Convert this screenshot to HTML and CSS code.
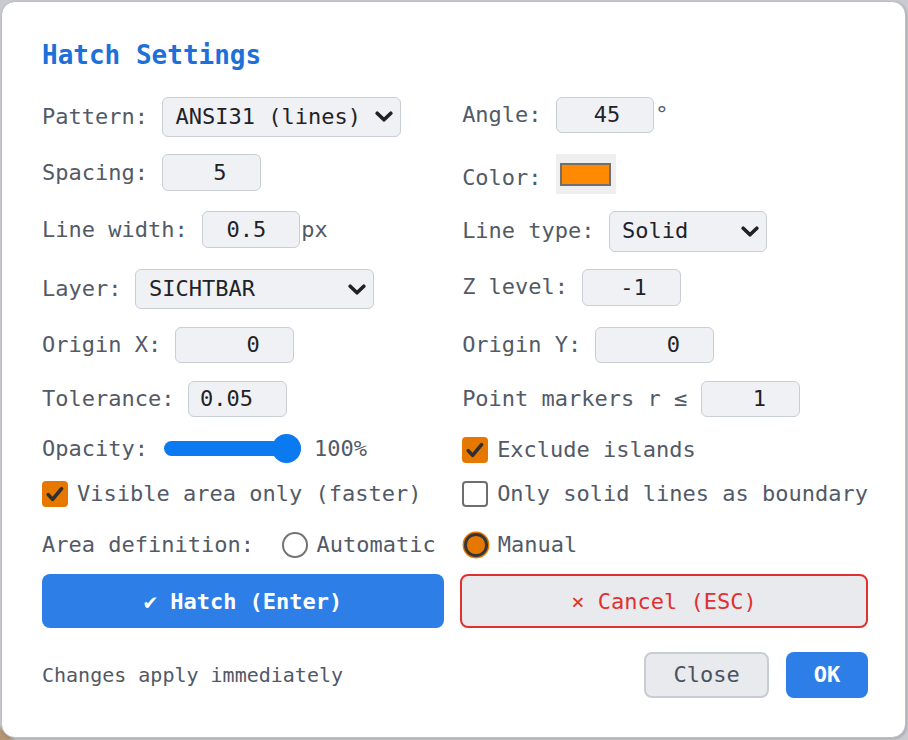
FILE: index.html
```html
<!DOCTYPE html>
<html>
<head>
<meta charset="utf-8">
<title>Hatch Settings</title>
<link rel="stylesheet" href="styles.css">
</head>
<body>
<div class="dialog">
  <h1 class="title">Hatch Settings</h1>
  <div class="form">
    <div class="field">
      <span class="lbl">Pattern:</span>
      <div class="select w-pattern"><span>ANSI31 (lines)</span><svg class="chev" viewBox="0 0 18 11" width="18" height="11"><path d="M2.2 2.2 L9 8.8 L15.8 2.2" /></svg></div>
    </div>
    <div class="field">
      <span class="lbl">Angle:</span>
      <span class="ctl"><input class="num" value="45" readonly><span class="unit">°</span></span>
    </div>

    <div class="field">
      <span class="lbl">Spacing:</span>
      <input class="num" value="5" readonly>
    </div>
    <div class="field">
      <span class="lbl lbl-low">Color:</span>
      <span class="color"><span class="swatch"></span></span>
    </div>

    <div class="field">
      <span class="lbl">Line width:</span>
      <span class="ctl"><input class="num" value="0.5" readonly><span class="unit">px</span></span>
    </div>
    <div class="field">
      <span class="lbl">Line type:</span>
      <div class="select w-type"><span>Solid</span><svg class="chev" viewBox="0 0 18 11" width="18" height="11"><path d="M2.2 2.2 L9 8.8 L15.8 2.2" /></svg></div>
    </div>

    <div class="field">
      <span class="lbl">Layer:</span>
      <div class="select w-pattern"><span>SICHTBAR</span><svg class="chev" viewBox="0 0 18 11" width="18" height="11"><path d="M2.2 2.2 L9 8.8 L15.8 2.2" /></svg></div>
    </div>
    <div class="field">
      <span class="lbl">Z level:</span>
      <input class="num" value="-1" readonly>
    </div>

    <div class="field">
      <span class="lbl">Origin X:</span>
      <input class="num wide" value="0" readonly>
    </div>
    <div class="field">
      <span class="lbl">Origin Y:</span>
      <input class="num wide" value="0" readonly>
    </div>

    <div class="field">
      <span class="lbl">Tolerance:</span>
      <input class="num" value="0.05" readonly>
    </div>
    <div class="field">
      <span class="lbl">Point markers r ≤</span>
      <input class="num" value="1" readonly>
    </div>

    <div class="field">
      <span class="lbl">Opacity:</span>
      <span class="range"><span class="track"></span><span class="thumb"></span></span>
      <span class="lbl pct">100%</span>
    </div>
    <div class="field mid">
      <span class="box checked"><svg viewBox="0 0 26 26" width="26" height="26"><path d="M6.2 13.6 L10.6 18.4 L19.6 7.6" /></svg></span>
      <span class="lbl">Exclude islands</span>
    </div>

    <div class="field chk">
      <span class="box checked"><svg viewBox="0 0 26 26" width="26" height="26"><path d="M6.2 13.6 L10.6 18.4 L19.6 7.6" /></svg></span>
      <span class="lbl">Visible area only (faster)</span>
    </div>
    <div class="field chk">
      <span class="box"></span>
      <span class="lbl">Only solid lines as boundary</span>
    </div>

    <div class="field chk r9">
      <span class="lbl">Area definition:</span>
      <span class="opt"><span class="radio"></span><span class="lbl">Automatic</span></span>
    </div>
    <div class="field chk r9">
      <span class="opt"><span class="radio on"></span><span class="lbl">Manual</span></span>
    </div>
  </div>

  <div class="actions">
    <button class="btn primary big">✔ Hatch (Enter)</button>
    <button class="btn danger big">× Cancel (ESC)</button>
  </div>

  <div class="footer">
    <span class="note">Changes apply immediately</span>
    <div class="footer-btns">
      <button class="btn plain close">Close</button>
      <button class="btn primary ok">OK</button>
    </div>
  </div>
</div>
</body>
</html>
```

FILE: styles.css
```css
html, body {
  margin: 0;
  height: 100%;
}
body {
  background:
    radial-gradient(circle at 0 100%, #b39474 0, #b39474 9px, rgba(179,148,116,0) 16px),
    #c9cbd0;
  font-family: "DejaVu Sans Mono", "Liberation Mono", monospace;
  overflow: hidden;
}
.dialog {
  box-sizing: border-box;
  width: 905px;
  height: 737px;
  margin: 1px 0 0 1px;
  border: 1px solid #bcbfc5;
  border-radius: 14px;
  background: #ffffff;
  padding: 37px 37px 0 40px;
  box-shadow: 1px 1px 3px rgba(0, 0, 0, 0.18);
}
.title {
  margin: 0 0 25.7px 0;
  font-size: 26px;
  line-height: 32px;
  font-weight: bold;
  color: #1d6fd9;
}
.form {
  display: grid;
  grid-template-columns: 1fr 1fr;
  column-gap: 16px;
  row-gap: 17.3px;
  align-items: start;
}
.field {
  display: flex;
  align-items: center;
  gap: 14px;
  font-size: 22px;
  line-height: 26px;
  color: #535a67;
  white-space: nowrap;
}
.field.mid {
  align-self: stretch;
  box-sizing: border-box;
  padding-top: 2.5px;
  gap: 9px;
}
.field.chk {
  gap: 9px;
}
.r9 {
  margin-top: 8px;
}
.r9 .opt {
  margin-left: 19px;
}
.r9:last-child .opt {
  margin-left: 1px;
}
.opt {
  display: flex;
  align-items: center;
  gap: 9px;
}
.lbl-low {
  padding-top: 8px;
}
.ctl {
  display: flex;
  align-items: center;
  gap: 1px;
}
.unit {
  color: #535a67;
}
.num {
  box-sizing: border-box;
  width: 98.6px;
  height: 36.6px;
  margin: 0;
  border: 1.5px solid #c9cdd4;
  border-radius: 6px;
  background: #f0f1f5;
  font-family: "DejaVu Sans Mono", "Liberation Mono", monospace;
  font-size: 22px;
  color: #1f2328;
  text-align: right;
  padding: 0 33px 0 8px;
  outline: none;
}
.num.wide {
  width: 118.6px;
}
.select {
  box-sizing: border-box;
  height: 40.4px;
  border: 1.5px solid #c9cdd4;
  border-radius: 6px;
  background: #f0f1f5;
  color: #1f2328;
  display: flex;
  align-items: center;
  justify-content: space-between;
  padding: 0 7px 0 12.5px;
}
.w-pattern {
  width: 238.6px;
}
.w-type {
  width: 158.6px;
}
.chev path {
  fill: none;
  stroke: #1e2126;
  stroke-width: 3.6;
  stroke-linecap: round;
  stroke-linejoin: round;
}
.color {
  box-sizing: border-box;
  width: 60px;
  height: 39.6px;
  background: #efefef;
  display: flex;
  align-items: center;
  justify-content: center;
}
.swatch {
  box-sizing: border-box;
  width: 51px;
  height: 23px;
  border: 2px solid #6f6f6f;
  background: #ff8a00;
}
.range {
  position: relative;
  width: 137px;
  height: 29px;
  margin-left: 2px;
  display: flex;
  align-items: center;
}
.track {
  width: 100%;
  height: 15px;
  border-radius: 8px;
  background: #0b7af1;
}
.thumb {
  position: absolute;
  right: 0;
  top: 0;
  width: 29px;
  height: 29px;
  border-radius: 50%;
  background: #0b7af1;
}
.pct {
  margin-left: -1px;
}
.box {
  box-sizing: border-box;
  width: 26px;
  height: 26px;
  flex: none;
  border: 2px solid #6e6e6e;
  border-radius: 4px;
  background: #ffffff;
  display: flex;
}
.box.checked {
  border: none;
  background: #e67800;
}
.box svg path {
  fill: none;
  stroke: #2f2f2f;
  stroke-width: 3.6;
  stroke-linecap: round;
  stroke-linejoin: round;
}
.radio {
  box-sizing: border-box;
  width: 25.6px;
  height: 25.6px;
  flex: none;
  border: 2px solid #737373;
  border-radius: 50%;
  background: #ffffff;
}
.radio.on {
  width: 23.4px;
  height: 23.4px;
  margin: 1.1px;
  border: 3.5px solid #363636;
  background: #e67800;
  box-shadow: 0 0 0 1.4px #e67800;
}
.actions {
  display: grid;
  grid-template-columns: 402px 1fr;
  column-gap: 16px;
  margin-top: 16px;
}
.btn {
  box-sizing: border-box;
  margin: 0;
  font-family: "DejaVu Sans Mono", "Liberation Mono", monospace;
  font-size: 22px;
  border-radius: 8px;
  cursor: pointer;
}
.big {
  height: 54px;
}
.primary {
  border: none;
  background: #2d7fe7;
  color: #ffffff;
  font-weight: bold;
}
.danger {
  border: 2px solid #e03131;
  background: #e9eaee;
  color: #e03131;
}
.footer {
  display: flex;
  align-items: center;
  justify-content: space-between;
  margin-top: 24px;
}
.note {
  font-size: 20px;
  color: #525866;
}
.footer-btns {
  display: flex;
  gap: 16.7px;
}
.plain {
  border: 2px solid #c8ccd3;
  background: #e9eaee;
  color: #4b5261;
}
.close {
  width: 125.3px;
  height: 45.7px;
}
.ok {
  width: 82px;
  height: 45.7px;
}
```
